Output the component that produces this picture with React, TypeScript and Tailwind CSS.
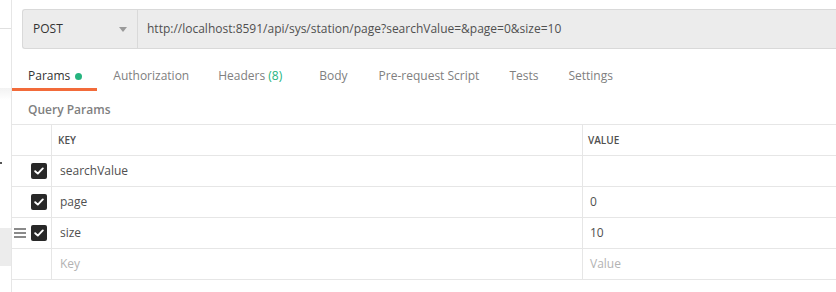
const rows = [
  { key: "searchValue", value: "", handle: false },
  { key: "page", value: "0", handle: false },
  { key: "size", value: "10", handle: true },
];

function Check() {
  return (
    <div className="w-4 h-4 rounded-[2px] bg-[#282828] flex items-center justify-center">
      <svg width="10" height="8" viewBox="0 0 10 8" fill="none">
        <path d="M1.2 4.2 L3.8 6.6 L8.8 1.4" stroke="#fff" strokeWidth="1.9" strokeLinecap="round" strokeLinejoin="round" />
      </svg>
    </div>
  );
}

function Handle() {
  return (
    <div className="flex flex-col gap-[2px] w-3">
      <div className="h-[2px] bg-[#8a8a8a]" />
      <div className="h-[2px] bg-[#8a8a8a]" />
      <div className="h-[2px] bg-[#8a8a8a]" />
    </div>
  );
}

export default function App() {
  return (
    <div className="w-[836px] h-[292px] overflow-hidden bg-white flex text-[12px] text-[#505050]" style={{ fontFamily: '"Open Sans", "Liberation Sans", sans-serif' }}>
      {/* Left sidebar sliver */}
      <div className="w-[12px] shrink-0 border-r border-[#e6e6e6] flex flex-col">
        <div className="h-[28px]" />
        <div className="h-px bg-[#e0e0e0]" />
        <div className="h-[59px]" />
        <div className="h-[12px] bg-gradient-to-b from-[#f2f2f2] to-white" />
        <div className="h-[62px]" />
        <div className="h-[2px] w-[2px] bg-[#555]" />
        <div className="h-[64px]" />
        <div className="h-[38px] bg-[#ececec]" />
      </div>

      {/* Main */}
      <div className="flex-1 min-w-0 flex flex-col">
        {/* URL bar */}
        <div className="pl-[10px] pt-[9px]">
          <div className="h-[40px] flex bg-[#ececec] border border-r-0 border-[#d9d9d9] rounded-l-[3px]">
            <div className="w-[115px] shrink-0 flex items-center justify-between pl-[10px] pr-[10px] border-r border-[#d9d9d9] text-[#333]">
              <span>POST</span>
              <svg width="8" height="5" viewBox="0 0 8 5">
                <path d="M0 0 H8 L4 5 Z" fill="#9a9a9a" />
              </svg>
            </div>
            <div className="flex items-center pl-[9px] text-[#505050] whitespace-nowrap">
              http://localhost:8591/api/sys/station/page?searchValue=&amp;page=0&amp;size=10
            </div>
          </div>
        </div>

        {/* Tabs */}
        <div className="mt-[18px] flex items-end h-[24px] text-[#808080]">
          <div className="relative h-full flex items-start pl-[16px] pr-[15px]">
            <span className="text-[#333]">Params</span>
            <span className="ml-[5px] mt-[6px] w-[7px] h-[7px] rounded-full bg-[#26b47f]" />
            <div className="absolute left-0 right-0 bottom-0 h-[3px] bg-[#f26b3a]" />
          </div>
          <div className="h-full pl-[16px] pr-[13px]">Authorization</div>
          <div className="h-full pl-[16px] pr-[20px]">
            Headers <span className="text-[#26b47f]">(8)</span>
          </div>
          <div className="h-full pl-[17px] pr-[14px]">Body</div>
          <div className="h-full pl-[17px] pr-[13px]">Pre-request Script</div>
          <div className="h-full pl-[17px] pr-[13px]">Tests</div>
          <div className="h-full pl-[17px]">Settings</div>
        </div>

        {/* Query params label */}
        <div className="pl-[16px] h-[33px] pt-[10px] font-semibold text-[#808080]">Query Params</div>

        {/* Table */}
        <div className="border-t border-[#e6e6e6]">
          <div className="flex h-[31px] border-b border-[#e6e6e6]">
            <div className="w-[40px] shrink-0 border-r border-[#e6e6e6]" />
            <div className="w-[531px] shrink-0 border-r border-[#e6e6e6] flex items-center pl-[6px] text-[10px] font-semibold text-[#505050]">KEY</div>
            <div className="flex-1 flex items-center pl-[5px] text-[10px] font-semibold text-[#505050]">VALUE</div>
          </div>
          {rows.map((r) => (
            <div key={r.key} className="flex h-[31px] border-b border-[#e6e6e6]">
              <div className="w-[40px] shrink-0 border-r border-[#e6e6e6] flex items-center justify-end pr-[4px] gap-[5px]">
                {r.handle && <Handle />}
                <Check />
              </div>
              <div className="w-[531px] shrink-0 border-r border-[#e6e6e6] flex items-center pl-[8px]">{r.key}</div>
              <div className="flex-1 flex items-center pl-[7px]">{r.value}</div>
            </div>
          ))}
          <div className="flex h-[31px] border-b border-[#e6e6e6] text-[#b3b3b3]">
            <div className="w-[40px] shrink-0 border-r border-[#e6e6e6]" />
            <div className="w-[531px] shrink-0 border-r border-[#e6e6e6] flex items-center pl-[8px]">Key</div>
            <div className="flex-1 flex items-center pl-[7px]">Value</div>
          </div>
        </div>
      </div>
    </div>
  );
}
